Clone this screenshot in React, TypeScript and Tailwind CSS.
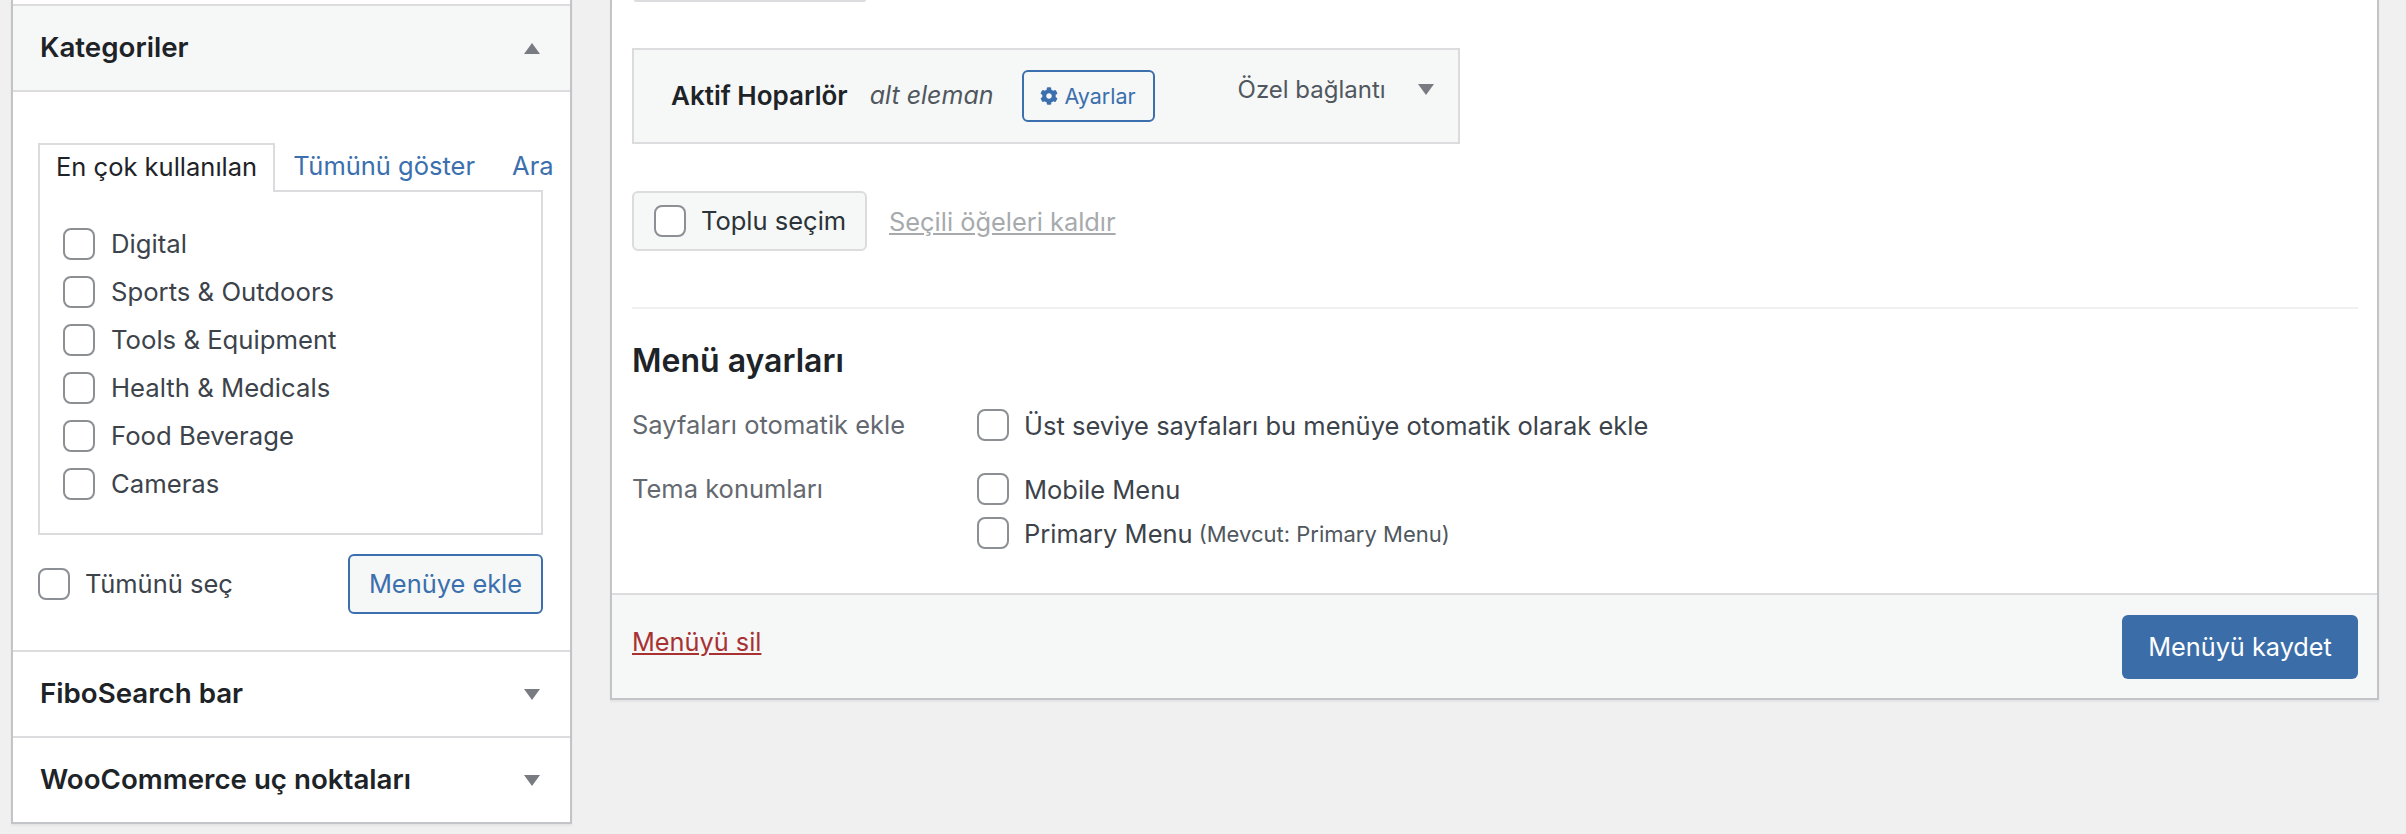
import React from "react";
import { FaCog } from "react-icons/fa";

const font = { fontFamily: "Inter, 'Liberation Sans', sans-serif" };

function Box({ className = "" }: { className?: string }) {
  return <span className={"block w-[32px] h-[32px] shrink-0 bg-white border-2 border-[#8c8f94] rounded-[8px] " + className} />;
}

function Tri({ up = false }: { up?: boolean }) {
  return (
    <svg width="16" height="11" viewBox="0 0 16 11" className="shrink-0">
      <path d={up ? "M8 0 L16 11 L0 11 Z" : "M0 0 L16 0 L8 11 Z"} fill="#787c82" />
    </svg>
  );
}

function Row({ label }: { label: string }) {
  return (
    <div className="flex items-center h-[48px]">
      <Box />
      <span className="ml-[16px] text-[25.7px] text-[#3c434a]">{label}</span>
    </div>
  );
}

function AccordionHead({ title, up = false, bg = "bg-white" }: { title: string; up?: boolean; bg?: string }) {
  return (
    <div className={"flex items-center justify-between h-[84px] pl-[27px] pr-[30px] " + bg}>
      <h3 className="text-[27.7px] font-semibold text-[#1d2327]">{title}</h3>
      <Tri up={up} />
    </div>
  );
}

export default function App() {
  return (
    <div style={font} className="h-[834px] overflow-hidden bg-[#f0f0f1] flex items-start">
      <aside className="ml-[11px] mt-[-2px] w-[561px] shrink-0 bg-white border-2 border-[#c3c4c7] border-t-0 shadow-[0_2px_2px_rgba(0,0,0,0.05)]">
        <div className="h-[6px]" />
        <div className="border-y-2 border-[#dcdcde]">
          <AccordionHead title="Kategoriler" up bg="bg-[#f6f7f7]" />
        </div>
        <div className="pl-[25px] pr-[27px] pt-[49px] h-[558px]">
          <div className="flex items-end h-[49px] whitespace-nowrap">
            <div className="relative z-10 h-[49px] px-[16px] bg-white border-2 border-b-0 border-[#dcdcde] flex items-center text-[25.5px] text-[#1d2327] -mb-[2px] pb-[2px]">
              En çok kullanılan
            </div>
            <a className="ml-[18px] h-[47px] flex items-center text-[25.5px] text-[#3b6fad]">Tümünü göster</a>
            <a className="ml-[37px] h-[47px] flex items-center text-[25.5px] text-[#3b6fad]">Ara</a>
          </div>
          <div className="border-2 border-[#dcdcde] h-[345px] pl-[23px] pt-[28px]">
            {["Digital", "Sports & Outdoors", "Tools & Equipment", "Health & Medicals", "Food Beverage", "Cameras"].map((l) => (
              <Row key={l} label={l} />
            ))}
          </div>
          <div className="flex items-center justify-between mt-[19px]">
            <div className="flex items-center">
              <Box />
              <span className="ml-[15px] text-[25.5px] text-[#3c434a]">Tümünü seç</span>
            </div>
            <button className="w-[195px] h-[60px] bg-[#f6f7f7] border-2 border-[#3b6fad] rounded-[6px] text-[25.4px] text-[#3b6fad]">Menüye ekle</button>
          </div>
        </div>
        <div className="border-t-2 border-[#dcdcde]">
          <AccordionHead title="FiboSearch bar" />
        </div>
        <div className="border-t-2 border-[#dcdcde]">
          <AccordionHead title="WooCommerce uç noktaları" />
        </div>
      </aside>

      <main className="ml-[38px] w-[1769px] shrink-0 bg-white border-2 border-t-0 border-[#c3c4c7] shadow-[0_2px_2px_rgba(0,0,0,0.05)]">
        <div className="pl-[20px] pr-[19px] h-[593px]">
          <div className="w-[232px] h-[2px] bg-[#dcdcde] rounded-b-[4px] ml-[2px]" />
          <div className="mt-[46px] w-[828px] h-[96px] bg-[#f6f7f7] border-2 border-[#dcdcde] flex items-start pl-[37px] whitespace-nowrap">
            <span className="mt-[26px] text-[26px] font-semibold text-[#1d2327]">Aktif Hoparlör</span>
            <span className="mt-[27px] ml-[22px] text-[25px] italic text-[#50575e]">alt eleman</span>
            <button className="mt-[20px] ml-[28px] w-[133px] h-[52px] border-2 border-[#3b6fad] rounded-[6px] flex items-center justify-center gap-[6px] text-[21.5px] text-[#3b6fad]">
              <FaCog className="w-[18px] h-[18px]" />
              Ayarlar
            </button>
            <span className="mt-[22px] ml-[83px] text-[24px] text-[#50575e]">Özel bağlantı</span>
            <span className="mt-[34px] ml-[32px]"><Tri /></span>
          </div>
          <div className="mt-[47px] flex items-center">
            <div className="w-[235px] h-[60px] bg-[#f6f7f7] border-2 border-[#dcdcde] rounded-[6px] flex items-center pl-[20px]">
              <Box />
              <span className="ml-[15px] mt-[1px] text-[25.5px] text-[#2c3338]">Toplu seçim</span>
            </div>
            <a className="ml-[22px] mt-[2px] text-[25.4px] text-[#a7aaad] underline">Seçili öğeleri kaldır</a>
          </div>
          <div className="mt-[56px] h-[2px] bg-[#f0f0f1]" />
          <h3 className="mt-[32px] text-[32px] leading-[40px] font-semibold text-[#1d2327]">Menü ayarları</h3>
          <div className="mt-[28px] flex">
            <div className="w-[345px] text-[25.5px] leading-[32px] text-[#646970]">Sayfaları otomatik ekle</div>
            <div className="flex items-center">
              <Box />
              <span className="ml-[15px] mt-[2px] text-[25.5px] leading-[30px] text-[#3c434a]">Üst seviye sayfaları bu menüye otomatik olarak ekle</span>
            </div>
          </div>
          <div className="mt-[32px] flex">
            <div className="w-[345px] text-[25.5px] leading-[32px] text-[#646970]">Tema konumları</div>
            <div className="flex flex-col gap-[12px]">
              <div className="flex items-center">
                <Box />
                <span className="ml-[15px] mt-[2px] text-[25.5px] leading-[30px] text-[#3c434a]">Mobile Menu</span>
              </div>
              <div className="flex items-center">
                <Box />
                <span className="ml-[15px] mt-[2px] text-[25.5px] leading-[30px] text-[#3c434a]">Primary Menu</span>
                <span className="ml-[6px] mt-[2px] text-[22px] leading-[30px] text-[#50575e]">(Mevcut: Primary Menu)</span>
              </div>
            </div>
          </div>
        </div>
        <div className="h-[105px] border-t-2 border-[#dcdcde] bg-[#f6f7f7] flex items-start justify-between pl-[20px] pr-[19px]">
          <a className="mt-[28px] text-[25.3px] text-[#a83232] underline">Menüyü sil</a>
          <button className="mt-[20px] w-[236px] h-[64px] bg-[#3b6ea9] rounded-[6px] text-[25.3px] text-white">Menüyü kaydet</button>
        </div>
      </main>
    </div>
  );
}
